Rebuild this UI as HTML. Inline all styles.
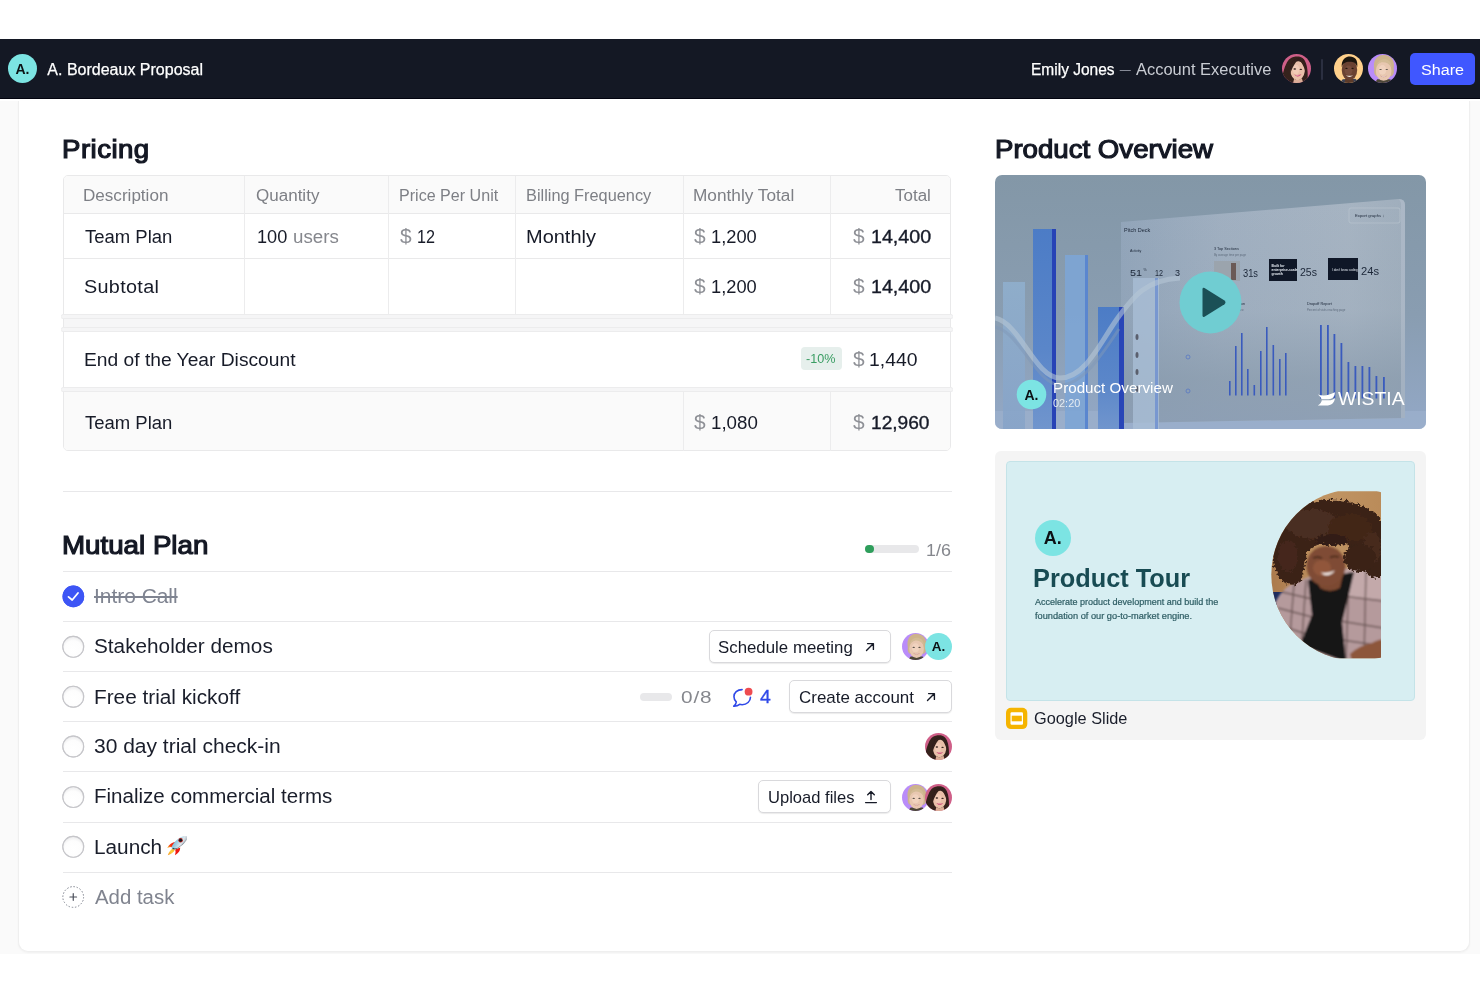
<!DOCTYPE html>
<html lang="en">
<head>
<meta charset="utf-8">
<title>A. Bordeaux Proposal</title>
<style>
*{box-sizing:border-box;margin:0;padding:0}
html,body{width:1480px;height:987px;overflow:hidden;background:#fff}
body{position:relative;font-family:"Liberation Sans",Arial,sans-serif;color:#161a27;-webkit-font-smoothing:antialiased}
#root{position:absolute;left:0;top:0;width:1480px;height:987px;will-change:transform}
.abs{position:absolute}
.bg{left:0;top:101px;width:1480px;height:853px;background:#fafafa}
.card{left:18px;top:101px;width:1452px;height:851px;border-top:none !important;background:#fff;border:1px solid #efefef;border-radius:0 0 10px 10px;box-shadow:0 1px 2px rgba(0,0,0,.04)}
.hdr{left:0;top:38.5px;width:1480px;height:60.5px;background:#141824;border-bottom:1.1px solid #02030f}
.logo{border-radius:50%;background:#7ce4e3;color:#0c1114;font-weight:700;display:flex;align-items:center;justify-content:center}
.t{position:absolute;white-space:nowrap;line-height:1;transform-origin:0 50%}
h2{position:absolute;font-size:26px;font-weight:700;line-height:1;white-space:nowrap;color:#141824;letter-spacing:-.1px}

.tbl{left:63px;top:175px;width:888px;height:276px;border:1px solid #e9e9ea;border-radius:5px;background:#fff;overflow:hidden}
.vl{position:absolute;width:1px;background:#ececed}
.hl{position:absolute;height:1px;background:#e9e9ea;left:63px;width:887px}
.thick{position:absolute;left:61px;width:891.500px;height:5px;background:#f5f5f6;border-radius:2.5px;box-shadow:inset 0 1px 0 #ececed,inset 0 -1px 0 #ececed}
.th{font-size:16px;color:#7d7f85;letter-spacing:.3px}
.td{font-size:18px;color:#171b28;letter-spacing:.05px}
.cur{color:#85878d}
.b{-webkit-text-stroke:.35px #171b28}

.rl{position:absolute;left:63px;width:889px;height:1px;background:#e8e8ea}
.task{font-size:20.5px;color:#1a1e2b;letter-spacing:.02px}
.cb{position:absolute;left:62px;width:22px;height:22px;border-radius:50%;border:1px solid #cfcfd2;background:#fff;box-shadow:inset 0 1px 2px rgba(0,0,0,.10)}
.btn{position:absolute;height:33px;border:1px solid #d9d9dc;border-radius:5px;background:#fff;box-shadow:0 1px 1px rgba(0,0,0,.08)}
.bt{font-size:16.3px;color:#171b28;letter-spacing:.1px}
.av{position:absolute;border-radius:50%;overflow:hidden}
</style>
</head>
<body>
<div id="root">

<svg width="0" height="0" style="position:absolute">
 <defs>
  <clipPath id="c30"><circle cx="15" cy="15" r="15"/></clipPath>
  <filter id="bl" x="-10%" y="-10%" width="120%" height="120%"><feGaussianBlur stdDeviation=".45"/></filter>
  <symbol id="av-emily" viewBox="0 0 30 30"><g clip-path="url(#c30)"><rect width="30" height="30" fill="#cf5f88"/><g filter="url(#bl)">
    <path d="M0 30 L0 24 C1.500 18 2.500 14 4 11 C6.500 5 10 2.500 16 2.500 C25 2.500 27.500 13 26.500 30 Z" fill="#34201b"/>
    <ellipse cx="16.300" cy="17.300" rx="7.300" ry="9.800" fill="#e9bfa9" transform="rotate(6 16.300 17.300)"/>
    <ellipse cx="14.500" cy="16" rx="3.500" ry="5" fill="#f2cdb9" opacity=".8"/>
    <path d="M8.500 14 C9 7.500 14 4.500 17 5 C14.500 8.500 11.500 12 9 19 Z" fill="#34201b"/>
    <path d="M17 5 C22 5 25 9.500 24.500 19 C22.500 12 20 8.500 17 5 Z" fill="#34201b"/>
    <path d="M11.500 30 L12.500 25.500 Q16.500 28.500 20.500 25 L22 30 Z" fill="#dcae98"/>
    <path d="M12.600 21.200 Q16.400 25.600 20.200 21 Q16.400 22.400 12.600 21.200 Z" fill="#c9356b"/>
    <path d="M13.600 21.700 Q16.400 23.600 19.200 21.500 Q16.400 22.500 13.600 21.700 Z" fill="#f6ece8"/>
    <ellipse cx="13.200" cy="15.600" rx="1.400" ry=".75" fill="#2e1c18"/><ellipse cx="19.500" cy="15.900" rx="1.400" ry=".75" fill="#2e1c18"/>
  </g></g></symbol>
  <symbol id="av-man" viewBox="0 0 30 30"><g clip-path="url(#c30)"><rect width="30" height="30" fill="#ffd08b"/><g filter="url(#bl)">
    <path d="M6 30 L9 26 L22 25.500 L27 30 Z" fill="#3c4355"/>
    <path d="M11 30 L12 24 L19.500 24 L20.500 30 Z" fill="#5c3a2a"/>
    <ellipse cx="16" cy="16.500" rx="8" ry="10.500" fill="#6a4331"/>
    <ellipse cx="15" cy="17" rx="4" ry="5" fill="#7b5140" opacity=".8"/>
    <path d="M8 13.500 C7.500 5 12.500 2.500 16.500 2.500 C21.500 2.500 25 6 24 13.500 C22.500 9 20.500 8 16 8 C11.500 8 9.500 9.500 8 13.500 Z" fill="#1c1411"/>
    <path d="M12.300 22 Q16 25.400 19.700 22 Q16 23.200 12.300 22 Z" fill="#f5efeb"/>
    <ellipse cx="12.900" cy="14.800" rx="1.300" ry=".7" fill="#1f130e"/><ellipse cx="19.200" cy="14.800" rx="1.300" ry=".7" fill="#1f130e"/>
  </g></g></symbol>
  <symbol id="av-blonde" viewBox="0 0 30 30"><g clip-path="url(#c30)"><rect width="30" height="30" fill="#b98cf9"/><g filter="url(#bl)">
    <path d="M6.500 16 C4.500 6 10 .5 16.500 1 C23.500 1 28.500 7 26.500 15 C27.500 19 26.500 22 24 23 L8.500 23 C6.500 21 6 19 6.500 16 Z" fill="#cdb38c"/>
    <path d="M7 30 L9.500 26 L23 26 L26 30 Z" fill="#4d4638"/>
    <ellipse cx="16.200" cy="17.600" rx="8.100" ry="10.200" fill="#e8c7b0"/>
    <ellipse cx="15" cy="16.500" rx="4" ry="5" fill="#f1d5c2" opacity=".8"/>
    <path d="M8.500 13.500 C9.500 6.500 14.500 5 18.500 5.500 C22.500 6.500 24.500 10 24.500 14 C22 9.500 18 8 14 8.500 C11.500 9.500 9.500 11 8.500 13.500 Z" fill="#d3bb96"/>
    <path d="M12.200 22.200 Q16.200 25.800 20.200 22.200 Q16.200 23.600 12.200 22.200 Z" fill="#c98f86"/>
    <path d="M13.300 22.600 Q16.200 24.400 19.100 22.600 Q16.200 23.400 13.300 22.600 Z" fill="#f7f0ec"/>
    <ellipse cx="13" cy="16" rx="1.300" ry=".6" fill="#5f544c"/><ellipse cx="19.400" cy="16" rx="1.300" ry=".6" fill="#5f544c"/>
  </g></g></symbol>
 </defs>
</svg>
<div class="abs bg"></div>
<div class="abs card"></div>

<!-- HEADER -->
<div class="abs hdr"></div>
<div class="abs logo" style="left:8px;top:54px;width:29px;height:29px;font-size:14px">A.</div>
<div class="abs" style="left:1410px;top:53px;width:65px;height:32px;border-radius:5px;background:#4057ff"></div>


<svg class="abs" style="left:1282px;top:54px" width="29" height="29"><use href="#av-emily" width="29" height="29"/></svg>
<div class="abs" style="left:1321px;top:59px;width:2px;height:21px;background:#2b2f40;border-radius:1px"></div>
<svg class="abs" style="left:1334px;top:54px" width="29" height="29"><use href="#av-man" width="29" height="29"/></svg>
<svg class="abs" style="left:1368px;top:54px" width="29" height="29"><use href="#av-blonde" width="29" height="29"/></svg>
<!-- PRICING -->


<div class="abs tbl">
  <div class="abs" style="left:0;top:0;width:888px;height:37px;background:#fafafa"></div>
  <div class="abs" style="left:0;top:140px;width:888px;height:16px;background:#f6f6f7"></div>
  <div class="abs" style="left:0;top:214px;width:888px;height:61px;background:#fafafa"></div>
</div>
<!-- row lines -->
<div class="hl" style="top:213px"></div>
<div class="hl" style="top:258px"></div>
<div class="thick" style="top:314px"></div>
<div class="thick" style="top:327px"></div>
<div class="thick" style="top:387px"></div>
<!-- column lines -->
<div class="vl" style="left:244px;top:176px;height:139px"></div>
<div class="vl" style="left:388px;top:176px;height:139px"></div>
<div class="vl" style="left:515px;top:176px;height:139px"></div>
<div class="vl" style="left:683px;top:176px;height:139px"></div>
<div class="vl" style="left:830px;top:176px;height:139px"></div>
<div class="vl" style="left:683px;top:391px;height:60px"></div>
<div class="vl" style="left:830px;top:391px;height:60px"></div>
<!-- header cells -->
<svg class="abs" style="left:55px;top:580px" width="40" height="335" viewBox="55 580 40 335">
 <defs><radialGradient id="cbg" cx=".5" cy=".62" r=".55"><stop offset="0" stop-color="#fff"/><stop offset=".75" stop-color="#fdfdfd"/><stop offset="1" stop-color="#f1f1f2"/></radialGradient></defs>
 <circle cx="73.350" cy="596.400" r="10.800" fill="#3d55f5"/>
 <path d="M68.500 596.900 L72.200 600 L78 593" fill="none" stroke="#fff" stroke-width="1.800" stroke-linecap="round" stroke-linejoin="round"/>
 <g fill="url(#cbg)" stroke="#c6c6ca" stroke-width="1.100">
  <circle cx="73.250" cy="646.800" r="10.400"/><circle cx="73.250" cy="696.700" r="10.400"/><circle cx="73.250" cy="746.500" r="10.400"/><circle cx="73.250" cy="797.100" r="10.400"/><circle cx="73.250" cy="846.800" r="10.400"/>
 </g>
 <circle cx="73.250" cy="897" r="10.300" fill="#fff" stroke="#9a9da6" stroke-width="1" stroke-dasharray="1.400 1.830"/>
 <path d="M73.250 893.700 V900.300 M69.950 897 H76.550" stroke="#4a4e5a" stroke-width="1.200" stroke-linecap="round"/>
</svg>
<!-- row 1 -->
<!-- row 2 -->
<!-- discount -->
<div class="abs" style="left:801px;top:347px;width:41px;height:23px;border-radius:4px;background:#e6efec"></div>
<!-- final -->

<!-- MUTUAL PLAN -->
<div class="rl" style="top:491px"></div>
<div class="abs" style="left:865px;top:545px;width:54px;height:8px;border-radius:4px;background:#e8e8ea"></div>
<div class="abs" style="left:865px;top:545px;width:9px;height:8px;border-radius:4px;background:#2e9e5b"></div>
<div class="rl" style="top:571px"></div>
<div class="rl" style="top:621px"></div>
<div class="rl" style="top:671px"></div>
<div class="rl" style="top:721px"></div>
<div class="rl" style="top:771px"></div>
<div class="rl" style="top:822px"></div>
<div class="rl" style="top:872px"></div>

<svg class="abs" style="left:55px;top:580px" width="40" height="335" viewBox="55 580 40 335">
 <defs><radialGradient id="cbg" cx=".5" cy=".62" r=".55"><stop offset="0" stop-color="#fff"/><stop offset=".75" stop-color="#fdfdfd"/><stop offset="1" stop-color="#f1f1f2"/></radialGradient></defs>
 <circle cx="73.350" cy="596.400" r="10.800" fill="#3d55f5"/>
 <path d="M68.500 596.900 L72.200 600 L78 593" fill="none" stroke="#fff" stroke-width="1.800" stroke-linecap="round" stroke-linejoin="round"/>
 <g fill="url(#cbg)" stroke="#c6c6ca" stroke-width="1.100">
  <circle cx="73.250" cy="646.800" r="10.400"/><circle cx="73.250" cy="696.700" r="10.400"/><circle cx="73.250" cy="746.500" r="10.400"/><circle cx="73.250" cy="797.100" r="10.400"/><circle cx="73.250" cy="846.800" r="10.400"/>
 </g>
 <circle cx="73.250" cy="897" r="10.300" fill="#fff" stroke="#9a9da6" stroke-width="1" stroke-dasharray="1.400 1.830"/>
 <path d="M73.250 893.700 V900.300 M69.950 897 H76.550" stroke="#4a4e5a" stroke-width="1.200" stroke-linecap="round"/>
</svg>
<!-- row 1 -->

<!-- row 2 -->
<div class="btn" style="left:709px;top:630px;width:182px"></div>
<svg class="abs" style="left:863px;top:640px" width="14" height="14" viewBox="0 0 14 14"><path d="M3.5 10.5 L10.2 3.8 M4.6 3.6 H10.4 V9.4" fill="none" stroke="#171b28" stroke-width="1.4" stroke-linecap="round" stroke-linejoin="round"/></svg>
<!-- row 3 -->
<div class="abs" style="left:640px;top:693px;width:32px;height:8px;border-radius:4px;background:#e8e8ea"></div>
<svg class="abs" style="left:729.500px;top:685px" width="26.400" height="26.400" viewBox="0 0 24 24"><path d="M11 4.200 C6.600 4.200 3.600 7 3.600 10.600 C3.600 12.500 4.400 14.100 5.700 15.300 C5.600 16.800 4.800 18.200 3.400 19.300 C5.800 19.400 7.600 18.600 8.800 17.600 C9.500 17.800 10.300 17.900 11 17.900 C15.400 17.900 18.600 14.800 18.600 11.200" fill="none" stroke="#2f49e8" stroke-width="1.450" stroke-linecap="round" stroke-linejoin="round"/><circle cx="16.900" cy="6.100" r="3.550" fill="#ee4b50"/></svg>
<div class="btn" style="left:789px;top:680px;width:163px"></div>
<svg class="abs" style="left:924px;top:690px" width="14" height="14" viewBox="0 0 14 14"><path d="M3.5 10.5 L10.2 3.8 M4.6 3.6 H10.4 V9.4" fill="none" stroke="#171b28" stroke-width="1.4" stroke-linecap="round" stroke-linejoin="round"/></svg>
<!-- row 4 -->
<!-- row 5 -->
<div class="btn" style="left:758px;top:780px;width:133px"></div>
<svg class="abs" style="left:863px;top:789px" width="16" height="16" viewBox="0 0 16 16"><path d="M8 10.6 V2.6 M4.7 5.8 L8 2.5 L11.3 5.8 M2.6 13.6 H13.4" fill="none" stroke="#171b28" stroke-width="1.4" stroke-linecap="round" stroke-linejoin="round"/></svg>
<!-- row 6 -->
<svg class="abs" role="img" aria-label="rocket" style="left:167px;top:835.7px" width="20" height="20" viewBox="0 0 20 20"><title>🚀</title>
 <defs>
  <linearGradient id="rk1" x1="0" y1="0" x2="1" y2="1"><stop offset="0" stop-color="#6fb4d6"/><stop offset=".38" stop-color="#a9d3e6"/><stop offset=".62" stop-color="#dfe7ec"/><stop offset=".82" stop-color="#b9c2ca"/><stop offset="1" stop-color="#46525d"/></linearGradient>
  <linearGradient id="rk2" x1="1" y1="0" x2="0" y2="1"><stop offset="0" stop-color="#f01a12"/><stop offset=".55" stop-color="#f42d10"/><stop offset="1" stop-color="#fbc12e"/></linearGradient>
  <linearGradient id="rk3" x1="1" y1="0" x2="0" y2="1"><stop offset="0" stop-color="#f9a51e"/><stop offset=".5" stop-color="#fdd23c"/><stop offset="1" stop-color="#f7901e"/></linearGradient>
 </defs>
 <path d="M6.800 12.200 Q2.200 14 .8 19.300 Q6 17.800 8 13.600 Z" fill="url(#rk3)"/>
 <path d="M8.600 5.800 Q3.200 6.800 .2 11.900 Q4 10.400 6.200 11.400 Z" fill="url(#rk2)"/>
 <path d="M13.200 11.600 Q13.400 16 8 19.300 Q9.200 16 8.200 13.400 Z" fill="#ef1a12"/>
 <g transform="rotate(-39.600 12.500 6.600)">
  <ellipse cx="12.500" cy="6.600" rx="9.700" ry="3.800" fill="url(#rk1)"/>
  <path d="M3 6.600 Q4 9.800 9 10 Q5 9.400 4.600 6.600 Z" fill="#27454f"/>
  <path d="M4 8.200 Q12 11.400 21 8 Q14 10.800 12 10.100 Q7 10.600 4 8.200 Z" fill="#4c5a66" opacity=".8"/>
 </g>
 <circle cx="13.600" cy="4.300" r="2.200" fill="#b9201b"/>
 <circle cx="13.600" cy="4.300" r="1.450" fill="#121a24"/>
</svg>
<!-- add task -->



<!-- task avatars -->
<svg class="abs" style="left:901.500px;top:633.200px" width="27" height="27"><use href="#av-blonde" width="27" height="27"/></svg>
<div class="abs logo" style="left:925px;top:633.200px;width:27px;height:27px;font-size:13.500px">A.</div>
<svg class="abs" style="left:924.600px;top:733.400px" width="27" height="27"><use href="#av-emily" width="27" height="27"/></svg>
<svg class="abs" style="left:901.500px;top:783.700px" width="27" height="27"><use href="#av-blonde" width="27" height="27"/></svg>
<svg class="abs" style="left:924.600px;top:783.700px" width="27" height="27"><use href="#av-emily" width="27" height="27"/></svg>
<!-- RIGHT COLUMN -->

<!-- video thumbnail -->
<svg class="abs" style="left:995px;top:175px" width="431" height="254" viewBox="0 0 431 254">
 <defs>
  <linearGradient id="vbg" x1="0" y1="0" x2="0" y2="1"><stop offset="0" stop-color="#8397a7"/><stop offset=".55" stop-color="#899db1"/><stop offset="1" stop-color="#93a8c6"/></linearGradient>
  <linearGradient id="pan" x1="0" y1="0" x2="1" y2="0"><stop offset="0" stop-color="#93a6bb"/><stop offset=".35" stop-color="#a2b1c2"/><stop offset=".8" stop-color="#a9b6c4"/><stop offset="1" stop-color="#a2b0be"/></linearGradient>
  <linearGradient id="pand" x1="0" y1="0" x2="0" y2="1"><stop offset="0" stop-color="#8698aa" stop-opacity="0"/><stop offset=".5" stop-color="#8698aa" stop-opacity=".1"/><stop offset=".8" stop-color="#8698aa" stop-opacity=".65"/><stop offset="1" stop-color="#8a9cb2" stop-opacity=".85"/></linearGradient>
  <linearGradient id="b1" x1="0" y1="0" x2="0" y2="1"><stop offset="0" stop-color="#90b0cf"/><stop offset="1" stop-color="#86a3c8"/></linearGradient>
  <linearGradient id="b2" x1="0" y1="0" x2="0" y2="1"><stop offset="0" stop-color="#4c7cc6"/><stop offset=".6" stop-color="#5a86c9"/><stop offset="1" stop-color="#7095cd"/></linearGradient>
  <clipPath id="vclip"><rect x="0" y="0" width="431" height="254" rx="7"/></clipPath>
 </defs>
 <g clip-path="url(#vclip)">
  <rect width="431" height="254" fill="url(#vbg)"/>
  <!-- floor -->
  <rect x="0" y="236" width="431" height="18" fill="#9db0cd" opacity=".7"/>
  <!-- panel -->
  <path d="M126 47 L404 24 Q410 24 410 30 L410 243 L126 248 Z" fill="url(#pan)" opacity=".92"/>
  <path d="M126 47 L404 24 Q410 24 410 30 L410 243 L126 248 Z" fill="url(#pand)"/>
  <path d="M404 24 Q410 24 410 30 L410 243 L406 243 L406 28 Z" fill="#b4c0cd" opacity=".55"/>
  <!-- bars -->
  <rect x="8" y="107" width="22" height="147" fill="url(#b1)" opacity=".85"/>
  <rect x="38" y="54" width="23" height="200" fill="url(#b2)"/>
  <rect x="57" y="54" width="4" height="200" fill="#2743b6"/>
  <rect x="70" y="80" width="23" height="174" fill="#7da5d5" opacity=".9"/>
  <rect x="90" y="80" width="3" height="174" fill="#5a86cf"/>
  <rect x="103" y="132" width="26" height="122" fill="url(#b2)"/>
  <rect x="124" y="132" width="5" height="122" fill="#2946b7"/>
  <rect x="138" y="103" width="26" height="151" fill="#a9bed6" opacity=".8"/>
  <rect x="160" y="103" width="3" height="151" fill="#6d8fd0" opacity=".8"/>
  <!-- ribbon curve -->
  <path d="M0 143 C25 148 40 203 65 203 C90 203 105 168 122 144 C138 122 150 105 185 103" fill="none" stroke="#b5c6d6" stroke-width="5" opacity=".6"/>
  <path d="M0 152 C25 157 42 210 65 210 C88 210 108 178 124 154" fill="none" stroke="#7f98b8" stroke-width="3" opacity=".5"/>
  <!-- panel content -->
  <g font-family="Liberation Sans, Arial, sans-serif" fill="#1c2738">
   <text x="129" y="57" font-size="5.5">Pitch Deck</text>
   <text x="135" y="77" font-size="3.6">Activity</text>
   <text x="135" y="101" font-size="9" textLength="12" lengthAdjust="spacingAndGlyphs">51</text>
   <text x="160" y="101" font-size="9" textLength="8" lengthAdjust="spacingAndGlyphs">12</text>
   <text x="180" y="101" font-size="9" textLength="5" lengthAdjust="spacingAndGlyphs">3</text>
   <text x="219" y="75" font-size="3.8">3 Top Sections</text>
   <text x="219" y="80.500" font-size="2.800" fill="#5e6b7c">By average time per page</text>
   <text x="312" y="136" font-size="2.800" fill="#5e6b7c">Percent of visits reaching page</text>
   <text x="238" y="136" font-size="2.800" fill="#5e6b7c">per view</text>
   <text x="148.500" y="96" font-size="3.500">%</text>
   <text x="248" y="102" font-size="11" textLength="15" lengthAdjust="spacingAndGlyphs">31s</text>
   <text x="305" y="101" font-size="11" textLength="17" lengthAdjust="spacingAndGlyphs">25s</text>
   <text x="366" y="100" font-size="11" textLength="18" lengthAdjust="spacingAndGlyphs">24s</text>
   <text x="238" y="130" font-size="3.8">section</text>
   <text x="312" y="130" font-size="3.8">Dropoff Report</text>
   <text x="360" y="42" font-size="4.2">Export graphs ↓</text>
  </g>
  <rect x="354" y="33" width="51" height="15" rx="2" fill="none" stroke="#bcc7d2" stroke-width=".6"/>
  <rect x="219" y="86" width="26" height="20" fill="#9ba4ad"/>
  <rect x="236" y="88" width="5" height="17" fill="#6b5a55"/>
  <rect x="274" y="84" width="28" height="22" fill="#0f1727"/>
  <rect x="333" y="83" width="30" height="22" fill="#0f1727"/>
  <g font-family="Liberation Sans, Arial, sans-serif" fill="#e6ecf3" font-size="3.400" font-weight="700"><text x="276.500" y="91.500">Built for</text><text x="276.500" y="95.700">enterprise-scale</text><text x="276.500" y="99.900">growth</text><text x="337" y="95.500" font-size="3" font-weight="400">I don’t know coding</text></g>
  <!-- chart 1 -->
  <g fill="#3a5bbd">
   <rect x="234" y="206" width="1.6" height="14.5"/><rect x="240" y="171" width="1.6" height="49.5"/><rect x="246" y="158" width="1.6" height="62.5"/><rect x="252" y="194" width="1.6" height="26.5"/><rect x="258.5" y="210" width="1.6" height="10.5"/><rect x="265" y="176" width="1.6" height="44.5"/><rect x="271" y="152" width="1.6" height="68.5"/><rect x="277.5" y="170" width="1.6" height="50.5"/><rect x="284" y="184" width="1.6" height="36.5"/><rect x="290" y="178" width="1.6" height="42.5"/>
  </g>
  <!-- chart 2 -->
  <g fill="#3a5bbd">
   <rect x="325" y="150" width="1.8" height="73.5"/><rect x="332" y="150" width="1.8" height="73.5"/><rect x="338.5" y="159" width="1.8" height="64.5"/><rect x="345.5" y="168" width="1.8" height="55.5"/><rect x="352.5" y="187" width="1.8" height="36.5"/><rect x="359.5" y="191" width="1.8" height="32.5"/><rect x="366.5" y="191" width="1.8" height="32.5"/><rect x="373.5" y="192" width="1.8" height="31.5"/><rect x="380.5" y="201" width="1.8" height="22.5"/><rect x="388" y="202" width="1.8" height="21.5"/>
  </g>
  <!-- small dots column -->
  <g fill="#3c3a44" opacity=".7"><ellipse cx="142" cy="162" rx="1.5" ry="3"/><ellipse cx="142" cy="180" rx="1.5" ry="3"/><ellipse cx="142" cy="197" rx="1.5" ry="3"/><ellipse cx="142" cy="214" rx="1.5" ry="3"/></g>
  <g fill="none" stroke="#4a6fc8" stroke-width=".8" opacity=".8"><circle cx="193" cy="182" r="2"/><circle cx="193" cy="216" r="2"/></g>
  <!-- play -->
  <circle cx="215.500" cy="127.400" r="31" fill="#70cdd2"/>
  <path d="M207.500 114.200 Q207.500 112 209.500 113.100 L229.500 125.500 Q231.500 127.400 229.500 129.300 L209.500 141.700 Q207.500 142.800 207.500 140.600 Z" fill="#1b5056"/>
  <!-- logo -->
  <circle cx="36.500" cy="219.500" r="14.800" fill="#7ce4e3"/>
  <text x="36.500" y="224.600" font-family="Liberation Sans, Arial, sans-serif" font-size="14" font-weight="700" fill="#0c1114" text-anchor="middle">A.</text>
  <text x="58" y="218" font-family="Liberation Sans, Arial, sans-serif" font-size="15.2" fill="#fff">Product Overview</text>
  <text x="58" y="232" font-family="Liberation Sans, Arial, sans-serif" font-size="10.9" fill="#e4ebf2">02:20</text>
  <!-- wistia -->
  <path d="M322.700 219.400 C328 221.200 334 220.600 339.900 217.300 C339.900 221 338 224.100 333.500 224.200 L326.600 224.200 C326.100 222.500 324.600 220.700 322.700 219.400 Z M322.700 230.600 C325 229.100 326.500 227.600 326.800 225.300 L333.500 225.300 C336.200 225.300 338.600 224.500 339.900 223 C339.600 228 336.200 230.600 331.200 230.600 Z" fill="#fff"/>
  <text x="343" y="230.300" font-family="Liberation Sans, Arial, sans-serif" font-size="18.300" fill="#fff" textLength="66.600" lengthAdjust="spacingAndGlyphs">WISTIA</text>
 </g>
</svg>

<!-- slide card -->
<div class="abs" style="left:995px;top:451px;width:431px;height:289px;border-radius:6px;background:#f4f4f4"></div>
<div class="abs" style="left:1006px;top:461px;width:409px;height:240px;border-radius:4px;background:#d7eef2;border:1px solid #c4e3e8"></div>
<div class="abs logo" style="left:1034.500px;top:519.500px;width:36.500px;height:36.500px;font-size:18px;padding-top:1.700px">A.</div>
<svg class="abs" style="left:1265px;top:485px" width="125" height="180" viewBox="1265 485 125 180">
 <defs><clipPath id="pclip"><circle cx="1357.300" cy="574.800" r="86"/></clipPath><clipPath id="pclip2"><rect x="1265" y="491.200" width="116" height="167"/></clipPath>
 <filter id="pb" x="-5%" y="-5%" width="110%" height="110%"><feGaussianBlur stdDeviation=".9"/></filter>
 <filter id="hb" x="-10%" y="-10%" width="120%" height="120%"><feTurbulence type="fractalNoise" baseFrequency=".35" numOctaves="2" seed="4" result="n"/><feDisplacementMap in="SourceGraphic" in2="n" scale="7" xChannelSelector="R" yChannelSelector="G"/><feGaussianBlur stdDeviation=".5"/></filter>
 <linearGradient id="wood" x1="0" y1="0" x2="1" y2="0"><stop offset="0" stop-color="#a9784a"/><stop offset=".5" stop-color="#c09463"/><stop offset="1" stop-color="#b98a58"/></linearGradient>
 </defs>
 <g clip-path="url(#pclip2)"><g clip-path="url(#pclip)">
  <rect x="1265" y="485" width="125" height="180" fill="url(#wood)"/>
  <rect x="1265" y="592" width="22" height="14" fill="#1d2c5e"/>
  <g filter="url(#pb)">
  <!-- jacket -->
  <path d="M1272 612 Q1278 588 1300 580 L1318 574 L1350 568 L1385 566 L1385 665 L1296 665 Z" fill="#b59a9c"/>
  <path d="M1339 575 L1352 566 L1385 562 L1385 600 L1342 598 Z" fill="#c3a9aa"/>
  <g stroke="#54413f" stroke-width="1.400" opacity=".75" fill="none"><path d="M1282 592 L1316 600"/><path d="M1278 608 L1312 617"/><path d="M1282 626 L1306 634"/><path d="M1342 596 L1383 601"/><path d="M1340 621 L1383 628"/><path d="M1342 640 L1383 646"/><path d="M1294 584 L1290 636"/><path d="M1306 580 L1302 640"/><path d="M1349 572 L1346 660"/><path d="M1366 570 L1364 660"/></g>
  <!-- shirt -->
  <path d="M1308 580 L1354 572 L1348 598 L1342 622 L1346 662 L1300 645 L1312 615 Z" fill="#121212"/>
  <!-- hands -->
  <path d="M1350 654 Q1358 646 1372 643 Q1380 638 1385 640 L1385 662 L1352 662 Z" fill="#8d563b"/>
  <!-- neck + face -->
  <path d="M1314 574 L1344 570 L1340 588 Q1330 594 1320 588 Z" fill="#7b4830"/>
  <ellipse cx="1326" cy="566" rx="19.500" ry="20" fill="#7f4c34"/>
  <ellipse cx="1322" cy="568" rx="9" ry="8" fill="#96593d" opacity=".8"/>
  <path d="M1320.500 572.500 Q1328 579 1335 570.500 Q1328 574 1320.500 572.500 Z" fill="#f4ebe6"/>
  <path d="M1313 558 Q1318 556 1322 558.500" stroke="#2a1711" stroke-width="1.300" fill="none"/><path d="M1330 557.500 Q1334 555.500 1339 557" stroke="#2a1711" stroke-width="1.300" fill="none"/>
  </g>
  <!-- hair -->
  <g filter="url(#hb)">
   <path d="M1273 562 C1268 530 1288 505 1318 501 C1345 496 1376 505 1388 530 L1388 572 C1380 582 1368 578 1362 566 C1358 554 1352 545 1344 544 C1332 541 1318 543 1310 549 C1304 556 1306 572 1300 582 C1290 590 1276 580 1273 562 Z" fill="#3a2218"/>
   <ellipse cx="1312" cy="524" rx="26" ry="15" fill="#4a2d20"/>
   <ellipse cx="1350" cy="528" rx="22" ry="14" fill="#432719"/>
   <ellipse cx="1332" cy="540" rx="16" ry="6" fill="#331c13"/>
   <ellipse cx="1288" cy="556" rx="10" ry="16" fill="#44281c"/>
   <ellipse cx="1372" cy="548" rx="9" ry="16" fill="#472b1e"/>
   <ellipse cx="1360" cy="558" rx="16" ry="14" fill="#3a2218"/>
  </g>
 </g></g>
</svg>
<!-- google slide label -->
<svg class="abs" style="left:1005px;top:706px" width="24" height="24" viewBox="1005 706 24 24"><rect x="1006" y="707.800" width="21.300" height="21.300" rx="5" fill="#f5b400"/><rect x="1010.500" y="712.200" width="12.500" height="12.600" rx="1.200" fill="#fff"/><rect x="1011.700" y="715.700" width="10.100" height="5.600" fill="#f5b400"/></svg>
<div class="t" style="left:47.37px;top:62.10px;font-size:16px;color:#fff;-webkit-text-stroke:.25px #fff">A. Bordeaux Proposal</div>
<div class="t" style="left:1031.00px;top:62.10px;font-size:16px;color:#fff;transform:scaleX(0.9689);-webkit-text-stroke:.25px #fff">Emily Jones</div>
<div class="t" style="left:1119.69px;top:64.10px;font-size:11px;color:#a9adb8">—</div>
<div class="t" style="left:1136.40px;top:62.10px;font-size:16px;color:#c9ccd3;transform:scaleX(1.0287)">Account Executive</div>
<div class="t" style="left:1421.41px;top:63.10px;font-size:14.9px;color:#fff;transform:scaleX(1.0842)">Share</div>
<div class="t" style="left:62.14px;top:137.10px;font-size:25px;color:#141824;letter-spacing:0.412px;transform:scaleX(1.1057);-webkit-text-stroke:1.15px #141824">Pricing</div>
<div class="t" style="left:83.23px;top:188.10px;font-size:15.8px;color:#7d7f85;transform:scaleX(1.0808)">Description</div>
<div class="t" style="left:255.54px;top:188.10px;font-size:15.8px;color:#7d7f85;transform:scaleX(1.0776)">Quantity</div>
<div class="t" style="left:399.45px;top:188.10px;font-size:15.8px;color:#7d7f85;transform:scaleX(1.0178)">Price Per Unit</div>
<div class="t" style="left:526.49px;top:188.10px;font-size:15.8px;color:#7d7f85;transform:scaleX(1.0339)">Billing Frequency</div>
<div class="t" style="left:692.55px;top:188.10px;font-size:15.8px;color:#7d7f85;transform:scaleX(1.0911)">Monthly Total</div>
<div class="t" style="left:895.31px;top:188.10px;font-size:15.8px;color:#7d7f85;transform:scaleX(1.0752)">Total</div>
<div class="t" style="left:85.31px;top:228.10px;font-size:18px;color:#171b28;transform:scaleX(1.0273)">Team Plan</div>
<div class="t" style="left:256.57px;top:228.10px;font-size:18px;color:#171b28;transform:scaleX(1.0084)">100</div>
<div class="t" style="left:293.08px;top:228.10px;font-size:18px;color:#85878d;transform:scaleX(1.0397)">users</div>
<div class="t" style="left:400.03px;top:227.10px;font-size:19.5px;color:#8e9096;transform:scaleX(1.0726)">$</div>
<div class="t" style="left:417.49px;top:228.10px;font-size:18px;color:#171b28;letter-spacing:-0.013px;transform:scaleX(0.9000)">12</div>
<div class="t" style="left:525.69px;top:228.10px;font-size:18px;color:#171b28;transform:scaleX(1.1097)">Monthly</div>
<div class="t" style="left:693.63px;top:227.10px;font-size:19.5px;color:#8e9096;transform:scaleX(1.0726)">$</div>
<div class="t" style="left:711.47px;top:228.10px;font-size:18px;color:#171b28;transform:scaleX(1.0146)">1,200</div>
<div class="t" style="left:852.63px;top:227.10px;font-size:19.5px;color:#8e9096;transform:scaleX(1.0726)">$</div>
<div class="t" style="left:870.56px;top:228.10px;font-size:18px;color:#171b28;transform:scaleX(1.0919);-webkit-text-stroke:.35px #171b28">14,400</div>
<div class="t" style="left:84.46px;top:278.10px;font-size:18px;color:#171b28;letter-spacing:0.290px;transform:scaleX(1.1005)">Subtotal</div>
<div class="t" style="left:693.63px;top:277.10px;font-size:19.5px;color:#8e9096;transform:scaleX(1.0726)">$</div>
<div class="t" style="left:711.47px;top:278.10px;font-size:18px;color:#171b28;transform:scaleX(1.0146)">1,200</div>
<div class="t" style="left:852.63px;top:277.10px;font-size:19.5px;color:#8e9096;transform:scaleX(1.0726)">$</div>
<div class="t" style="left:870.56px;top:278.10px;font-size:18px;color:#171b28;transform:scaleX(1.0919);-webkit-text-stroke:.35px #171b28">14,400</div>
<div class="t" style="left:84.39px;top:351.10px;font-size:18px;color:#171b28;transform:scaleX(1.0674)">End of the Year Discount</div>
<div class="t" style="left:806.41px;top:353.10px;font-size:12.5px;color:#3a9d63;transform:scaleX(1.0096)">-10%</div>
<div class="t" style="left:852.63px;top:350.10px;font-size:19.5px;color:#8e9096;transform:scaleX(1.0726)">$</div>
<div class="t" style="left:868.82px;top:351.10px;font-size:18px;color:#171b28;transform:scaleX(1.0756)">1,440</div>
<div class="t" style="left:85.31px;top:414.10px;font-size:18px;color:#171b28;transform:scaleX(1.0273)">Team Plan</div>
<div class="t" style="left:693.64px;top:413.10px;font-size:19.5px;color:#8e9096;transform:scaleX(1.0726)">$</div>
<div class="t" style="left:711.28px;top:414.10px;font-size:18px;color:#171b28;transform:scaleX(1.0397)">1,080</div>
<div class="t" style="left:852.64px;top:413.10px;font-size:19.5px;color:#8e9096;transform:scaleX(1.0726)">$</div>
<div class="t" style="left:870.68px;top:414.10px;font-size:18px;color:#171b28;transform:scaleX(1.0625);-webkit-text-stroke:.35px #171b28">12,960</div>
<div class="t" style="left:61.55px;top:533.10px;font-size:25px;color:#141824;transform:scaleX(1.1086);-webkit-text-stroke:1.15px #141824">Mutual Plan</div>
<div class="t" style="left:926.38px;top:542.10px;font-size:16.3px;color:#85878d;transform:scaleX(1.1015)">1/6</div>
<div class="t" style="left:93.78px;top:586.10px;font-size:20px;color:#7f8491;transform:scaleX(1.0452);text-decoration:line-through">Intro Call</div>
<div class="t" style="left:93.99px;top:636.10px;font-size:20px;color:#1a1e2b;transform:scaleX(1.0373)">Stakeholder demos</div>
<div class="t" style="left:94.33px;top:687.10px;font-size:20px;color:#1a1e2b;transform:scaleX(1.0387)">Free trial kickoff</div>
<div class="t" style="left:94.35px;top:736.10px;font-size:20px;color:#1a1e2b;transform:scaleX(1.0494)">30 day trial check-in</div>
<div class="t" style="left:94.44px;top:786.10px;font-size:20px;color:#1a1e2b;transform:scaleX(1.0261)">Finalize commercial terms</div>
<div class="t" style="left:94.40px;top:837.10px;font-size:20px;color:#1a1e2b;transform:scaleX(1.0386)">Launch</div>
<div class="t" style="left:95.08px;top:887.10px;font-size:20px;color:#80848f;transform:scaleX(1.0197)">Add task</div>
<div class="t" style="left:718.40px;top:639.10px;font-size:16.2px;color:#171b28;transform:scaleX(1.0400)">Schedule meeting</div>
<div class="t" style="left:680.67px;top:689.10px;font-size:17.2px;color:#85878d;letter-spacing:0.732px;transform:scaleX(1.2089)">0/8</div>
<div class="t" style="left:759.51px;top:688.10px;font-size:18.5px;color:#2f49e8;transform:scaleX(1.0516);-webkit-text-stroke:.3px #2f49e8">4</div>
<div class="t" style="left:799.00px;top:689.10px;font-size:16.2px;color:#171b28;transform:scaleX(1.0473)">Create account</div>
<div class="t" style="left:767.70px;top:789.10px;font-size:16.2px;color:#171b28;transform:scaleX(1.0224)">Upload files</div>
<div class="t" style="left:995.15px;top:137.10px;font-size:25px;color:#141824;transform:scaleX(1.1048);-webkit-text-stroke:1.15px #141824">Product Overview</div>
<div class="t" style="left:1033.43px;top:566.10px;font-size:25.6px;color:#184b53;font-weight:700;transform:scaleX(0.9893)">Product Tour</div>
<div class="t" style="left:1035.00px;top:598.10px;font-size:8.7px;color:#2d5c63;transform:scaleX(1.0367);-webkit-text-stroke:.2px #2d5c63">Accelerate product development and build the</div>
<div class="t" style="left:1034.50px;top:612.10px;font-size:8.7px;color:#2d5c63;transform:scaleX(1.0627);-webkit-text-stroke:.2px #2d5c63">foundation of our go-to-market engine.</div>
<div class="t" style="left:1034.22px;top:710.10px;font-size:16.2px;color:#1a1e2b;transform:scaleX(1.0080)">Google Slide</div>
</div>
</body>
</html>
